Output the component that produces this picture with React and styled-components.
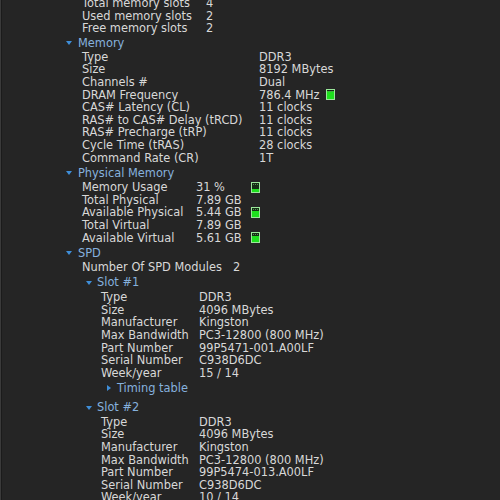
import React from 'react'
import styled, { createGlobalStyle } from 'styled-components'

const Global = createGlobalStyle`
  html, body { margin: 0; padding: 0; background: #252525; }
`

const top = [
  ['Total memory slots', '4'],
  ['Used memory slots', '2'],
  ['Free memory slots', '2'],
]

const memory = [
  ['Type', 'DDR3'],
  ['Size', '8192 MBytes'],
  ['Channels #', 'Dual'],
  ['DRAM Frequency', '786.4 MHz', 92],
  ['CAS# Latency (CL)', '11 clocks'],
  ['RAS# to CAS# Delay (tRCD)', '11 clocks'],
  ['RAS# Precharge (tRP)', '11 clocks'],
  ['Cycle Time (tRAS)', '28 clocks'],
  ['Command Rate (CR)', '1T'],
]

const physical = [
  ['Memory Usage', '31 %', 31],
  ['Total Physical', '7.89 GB'],
  ['Available Physical', '5.44 GB', 69],
  ['Total Virtual', '7.89 GB'],
  ['Available Virtual', '5.61 GB', 71],
]

const slots = [
  {
    name: 'Slot #1',
    rows: [
      ['Type', 'DDR3'],
      ['Size', '4096 MBytes'],
      ['Manufacturer', 'Kingston'],
      ['Max Bandwidth', 'PC3-12800 (800 MHz)'],
      ['Part Number', '99P5471-001.A00LF'],
      ['Serial Number', 'C938D6DC'],
      ['Week/year', '15 / 14'],
    ],
  },
  {
    name: 'Slot #2',
    rows: [
      ['Type', 'DDR3'],
      ['Size', '4096 MBytes'],
      ['Manufacturer', 'Kingston'],
      ['Max Bandwidth', 'PC3-12800 (800 MHz)'],
      ['Part Number', '99P5474-013.A00LF'],
      ['Serial Number', 'C938D6DC'],
      ['Week/year', '10 / 14'],
    ],
  },
]

function Gauge({ level }) {
  return (
    <GaugeBox>
      <GaugeCap />
      <GaugeFill style={{ height: `${level}%` }} />
    </GaugeBox>
  )
}

function Rows({ items, indent, labelWidth, valueWidth }) {
  return items.map(([label, value, level]) => (
    <Row key={label} $indent={indent}>
      <Label $w={labelWidth}>{label}</Label>
      <Value $w={level !== undefined ? valueWidth : undefined}>{value}</Value>
      {level !== undefined && <Gauge level={level} />}
    </Row>
  ))
}

export default function App() {
  return (
    <>
      <Global />
      <Panel>
        <Tree>
          <Rows items={top} indent={81} labelWidth={124} />

          <Header $h={16}>
            <Arrow />
            <Title>Memory</Title>
          </Header>
          <Rows items={memory} indent={81} labelWidth={177} valueWidth={67} />

          <Header $h={17}>
            <Arrow />
            <Title>Physical Memory</Title>
          </Header>
          <Rows items={physical} indent={81} labelWidth={114} valueWidth={55} />

          <Header $h={17}>
            <Arrow />
            <Title>SPD</Title>
          </Header>
          <Rows items={[['Number Of SPD Modules', '2']]} indent={81} labelWidth={151} />

          {slots.map(slot => (
            <SlotGroup key={slot.name}>
              <SlotHeader $h={17.5}>
                <Arrow />
                <Title>{slot.name}</Title>
              </SlotHeader>
              <Rows items={slot.rows} indent={100} labelWidth={98} />
              <SubHeader $h={17.5}>
                <Arrow $right />
                <Title>Timing table</Title>
              </SubHeader>
            </SlotGroup>
          ))}
        </Tree>
      </Panel>
    </>
  )
}

const Panel = styled.div`
  width: 500px;
  height: 500px;
  overflow: hidden;
  background: #252525;
  border-left: 1px solid #3a3a3a;
  box-shadow: inset 1px 0 #1b1b1b;
  box-sizing: border-box;
  font-family: "DejaVu Sans", Verdana, sans-serif;
  font-size: 11.4px;
  color: #d8d8d8;
`

const Tree = styled.div`
  display: flex;
  flex-direction: column;
  margin-top: -3px;
`

const Row = styled.div`
  display: flex;
  align-items: center;
  height: 12.6px;
  line-height: 12.6px;
  padding-left: ${p => p.$indent}px;
  white-space: nowrap;
`

const Label = styled.span`
  width: ${p => p.$w}px;
  flex: none;
`

const Value = styled.span`
  ${p => p.$w ? `width: ${p.$w}px; flex: none;` : ''}
`

const Header = styled.div`
  display: flex;
  align-items: center;
  height: ${p => p.$h}px;
  padding-left: 65px;
  gap: 6px;
`

const SlotGroup = styled.div`
  display: flex;
  flex-direction: column;
  margin-bottom: 1.5px;
`

const SlotHeader = styled(Header)`
  padding-left: 85px;
  gap: 5px;
`

const SubHeader = styled(Header)`
  padding-left: 106px;
  gap: 5px;
`

const Arrow = styled.span`
  width: 0;
  height: 0;
  flex: none;
  ${p => p.$right
    ? `border-top: 3px solid transparent; border-bottom: 3px solid transparent; border-left: 4px solid #3f8ed8; margin-right: 1px;`
    : `border-left: 3px solid transparent; border-right: 3px solid transparent; border-top: 4px solid #3f8ed8; margin-top: 1px;`}
`

const Title = styled.span`
  color: #86b1de;
  line-height: 16px;
`

const GaugeBox = styled.span`
  position: relative;
  width: 9px;
  height: 11px;
  box-sizing: border-box;
  border: 1px solid #9be89b;
  background: #143014;
  flex: none;
  overflow: hidden;
`

const GaugeCap = styled.span`
  position: absolute;
  left: 1px;
  right: 1px;
  top: 1px;
  height: 1px;
  background: repeating-linear-gradient(90deg, #5a8a5a 0 1px, transparent 1px 2px);
  z-index: 1;
`

const GaugeFill = styled.span`
  position: absolute;
  left: 0;
  right: 0;
  bottom: 0;
  background: #1ee01e;
`
